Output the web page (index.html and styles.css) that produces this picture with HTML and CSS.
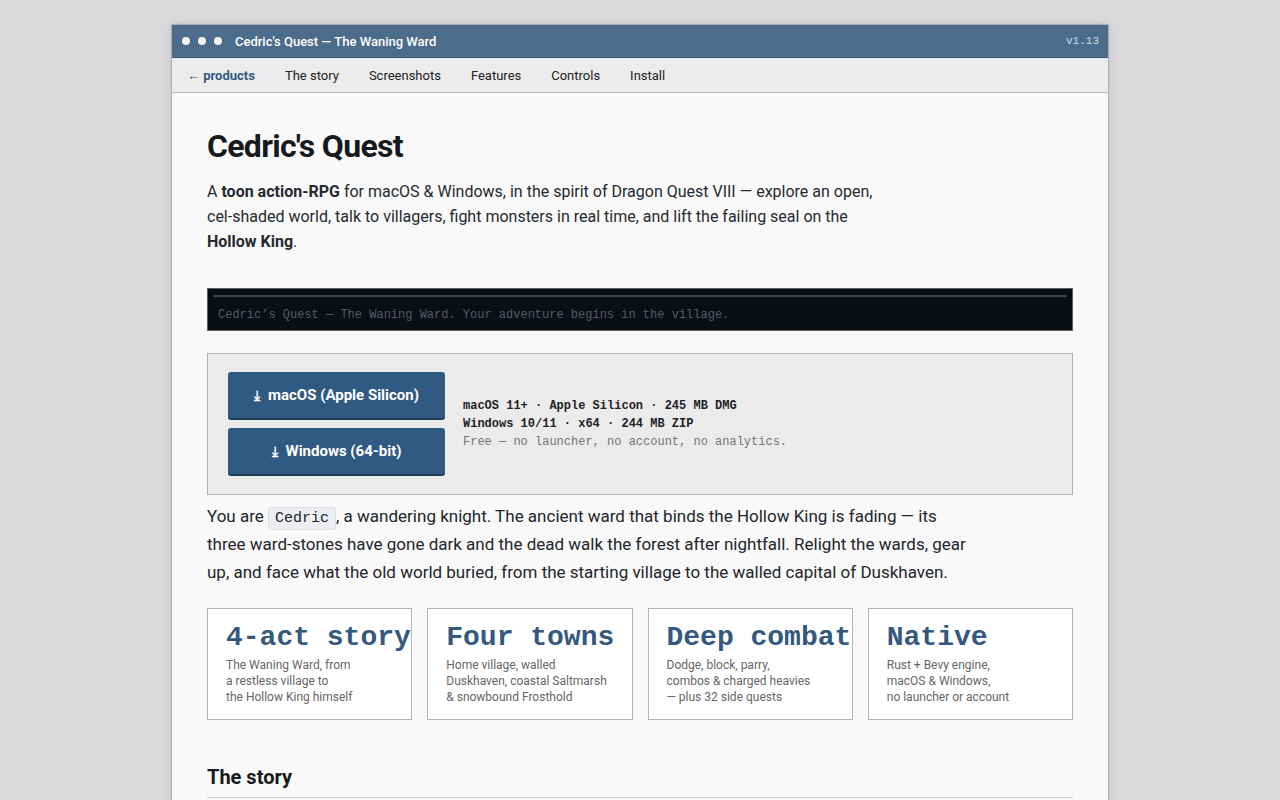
FILE: index.html
```html
<!DOCTYPE html>
<html lang="en">
<head>
    <meta charset="UTF-8">
    <meta name="viewport" content="width=device-width, initial-scale=1.0">
    <title>Cedric's Quest — The Waning Ward</title>
    <link rel="stylesheet" href="styles.css">
</head>
<body>
    <div class="window">
        <div class="titlebar">
            <div class="dots"><span></span><span></span><span></span></div>
            <div class="title">Cedric's Quest — The Waning Ward</div>
            <div class="version">v1.13</div>
        </div>

        <nav class="nav">
            <a href="#" class="back">← products</a>
            <a href="#story">The story</a>
            <a href="#">Screenshots</a>
            <a href="#">Features</a>
            <a href="#">Controls</a>
            <a href="#">Install</a>
        </nav>

        <main class="content">
            <h1>Cedric's Quest</h1>
            <p class="lead">A <b>toon action-RPG</b> for macOS &amp; Windows, in the spirit of Dragon Quest VIII — explore an open, cel-shaded world, talk to villagers, fight monsters in real time, and lift the failing seal on the <b>Hollow King</b>.</p>

            <div class="terminal">
                <div class="terminal-bar"></div>
                <div class="terminal-text">Cedric’s Quest — The Waning Ward. Your adventure begins in the village.</div>
            </div>

            <div class="download">
                <div class="buttons">
                    <a href="#" class="btn"><span class="arrow">⤓</span> macOS (Apple Silicon)</a>
                    <a href="#" class="btn"><span class="arrow">⤓</span> Windows (64-bit)</a>
                </div>
                <div class="info">
                    <div class="strong">macOS 11+ · Apple Silicon · 245 MB DMG</div>
                    <div class="strong">Windows 10/11 · x64 · 244 MB ZIP</div>
                    <div class="muted">Free — no launcher, no account, no analytics.</div>
                </div>
            </div>

            <p class="intro">You are <code>Cedric</code>, a wandering knight. The ancient ward that binds the Hollow King is fading — its three ward-stones have gone dark and the dead walk the forest after nightfall. Relight the wards, gear up, and face what the old world buried, from the starting village to the walled capital of Duskhaven.</p>

            <div class="cards">
                <div class="card">
                    <div class="card-title">4-act story</div>
                    <div class="card-text">The Waning Ward, from<br>a restless village to<br>the Hollow King himself</div>
                </div>
                <div class="card">
                    <div class="card-title">Four towns</div>
                    <div class="card-text">Home village, walled<br>Duskhaven, coastal Saltmarsh<br>&amp; snowbound Frosthold</div>
                </div>
                <div class="card">
                    <div class="card-title">Deep combat</div>
                    <div class="card-text">Dodge, block, parry,<br>combos &amp; charged heavies<br>— plus 32 side quests</div>
                </div>
                <div class="card">
                    <div class="card-title">Native</div>
                    <div class="card-text">Rust + Bevy engine,<br>macOS &amp; Windows,<br>no launcher or account</div>
                </div>
            </div>

            <h2 id="story">The story</h2>
        </main>
    </div>
</body>
</html>
```

FILE: styles.css
```css
body {
    margin: 0;
    padding-top: 24px;
    background: #d9d9d9;
    font-family: Roboto, "Liberation Sans", sans-serif;
    color: #1d2127;
    overflow: hidden;
}

.window {
    width: 936px;
    margin: 0 auto;
    border: 1px solid #a9adb2;
    background: #f9f9f9;
    min-height: 800px;
    box-shadow: 0 0 6px rgba(0, 0, 0, 0.12);
}

/* Title bar */
.titlebar {
    height: 32px;
    display: flex;
    align-items: center;
    background: #4b6c8a;
    border-bottom: 1px solid #39546d;
    padding: 0 9px 0 10px;
    color: #fff;
}

.dots {
    display: flex;
    gap: 8px;
    margin-right: 13px;
}

.dots span {
    width: 8px;
    height: 8px;
    border-radius: 50%;
    background: #f2f4f6;
}

.title {
    font-size: 13px;
    font-weight: 500;
    flex: 1;
}

.version {
    font-family: "Liberation Mono", monospace;
    font-size: 11px;
    color: #d3dce6;
}

/* Nav */
.nav {
    height: 34px;
    display: flex;
    align-items: center;
    gap: 30px;
    padding: 0 16px 0 15px;
    background: #ececec;
    border-bottom: 1px solid #b9b9b9;
}

.nav a {
    font-size: 13px;
    color: #222;
    text-decoration: none;
}

.nav a.back {
    color: #33597f;
    font-weight: bold;
}

/* Content */
.content {
    padding: 35px 35px;
}

h1 {
    font-size: 32px;
    line-height: 36px;
    letter-spacing: -0.7px;
    margin: 0 0 15px;
    color: #161a20;
}

.lead {
    font-size: 16px;
    line-height: 25px;
    max-width: 672px;
    margin: 0 0 34px;
    color: #262a30;
}

.terminal {
    background: #0b0f13;
    border: 1px solid #5b5f64;
    padding: 6px 5px 6px;
}

.terminal-bar {
    height: 2px;
    background: #3d4248;
    margin-bottom: 9px;
}

.terminal-text {
    font-family: "Liberation Mono", monospace;
    font-size: 12px;
    line-height: 18px;
    color: #555c66;
    padding-left: 5px;
}

.download {
    margin-top: 22px;
    display: flex;
    align-items: center;
    gap: 18px;
    padding: 18px 20px;
    background: #ebebeb;
    border: 1px solid #b5b5b5;
}

.buttons {
    width: 217px;
    display: flex;
    flex-direction: column;
    gap: 8px;
}

.btn {
    height: 46px;
    display: flex;
    align-items: center;
    justify-content: center;
    gap: 8px;
    background: #305a82;
    border-bottom: 2px solid #1d3a55;
    border-radius: 3px;
    color: #fff;
    font-size: 15px;
    font-weight: bold;
    text-decoration: none;
}

.arrow {
    font-family: "DejaVu Sans", sans-serif;
    font-size: 14px;
    font-weight: bold;
}

.info {
    font-family: "Liberation Mono", monospace;
    font-size: 12px;
    line-height: 18px;
}

.info .strong {
    font-weight: bold;
    color: #1f2227;
}

.info .muted {
    color: #747474;
}

.intro {
    font-size: 17px;
    line-height: 28px;
    max-width: 765px;
    margin: 7px 0 22px;
    color: #22262c;
}

code {
    font-family: "Liberation Mono", monospace;
    font-size: 15px;
    line-height: 1;
    background: #eceef1;
    border: 1px solid #dcdfe4;
    border-radius: 3px;
    padding: 2px 6px;
}

.cards {
    display: grid;
    grid-template-columns: repeat(4, minmax(0, 1fr));
    gap: 15px;
}

.card {
    background: #fff;
    border: 1px solid #b5b5b5;
    padding: 13px 18px 14px;
    white-space: nowrap;
}

.card-title {
    font-family: "Liberation Mono", monospace;
    font-size: 28px;
    line-height: 32px;
    font-weight: bold;
    color: #33597f;
    margin-bottom: 3px;
}

.card-text {
    font-size: 12px;
    line-height: 16px;
    color: #666;
}

h2 {
    font-size: 20px;
    line-height: 24px;
    margin: 45px 0 0;
    padding-bottom: 8px;
    border-bottom: 1px solid #cfcfcf;
    color: #161a20;
}
```
